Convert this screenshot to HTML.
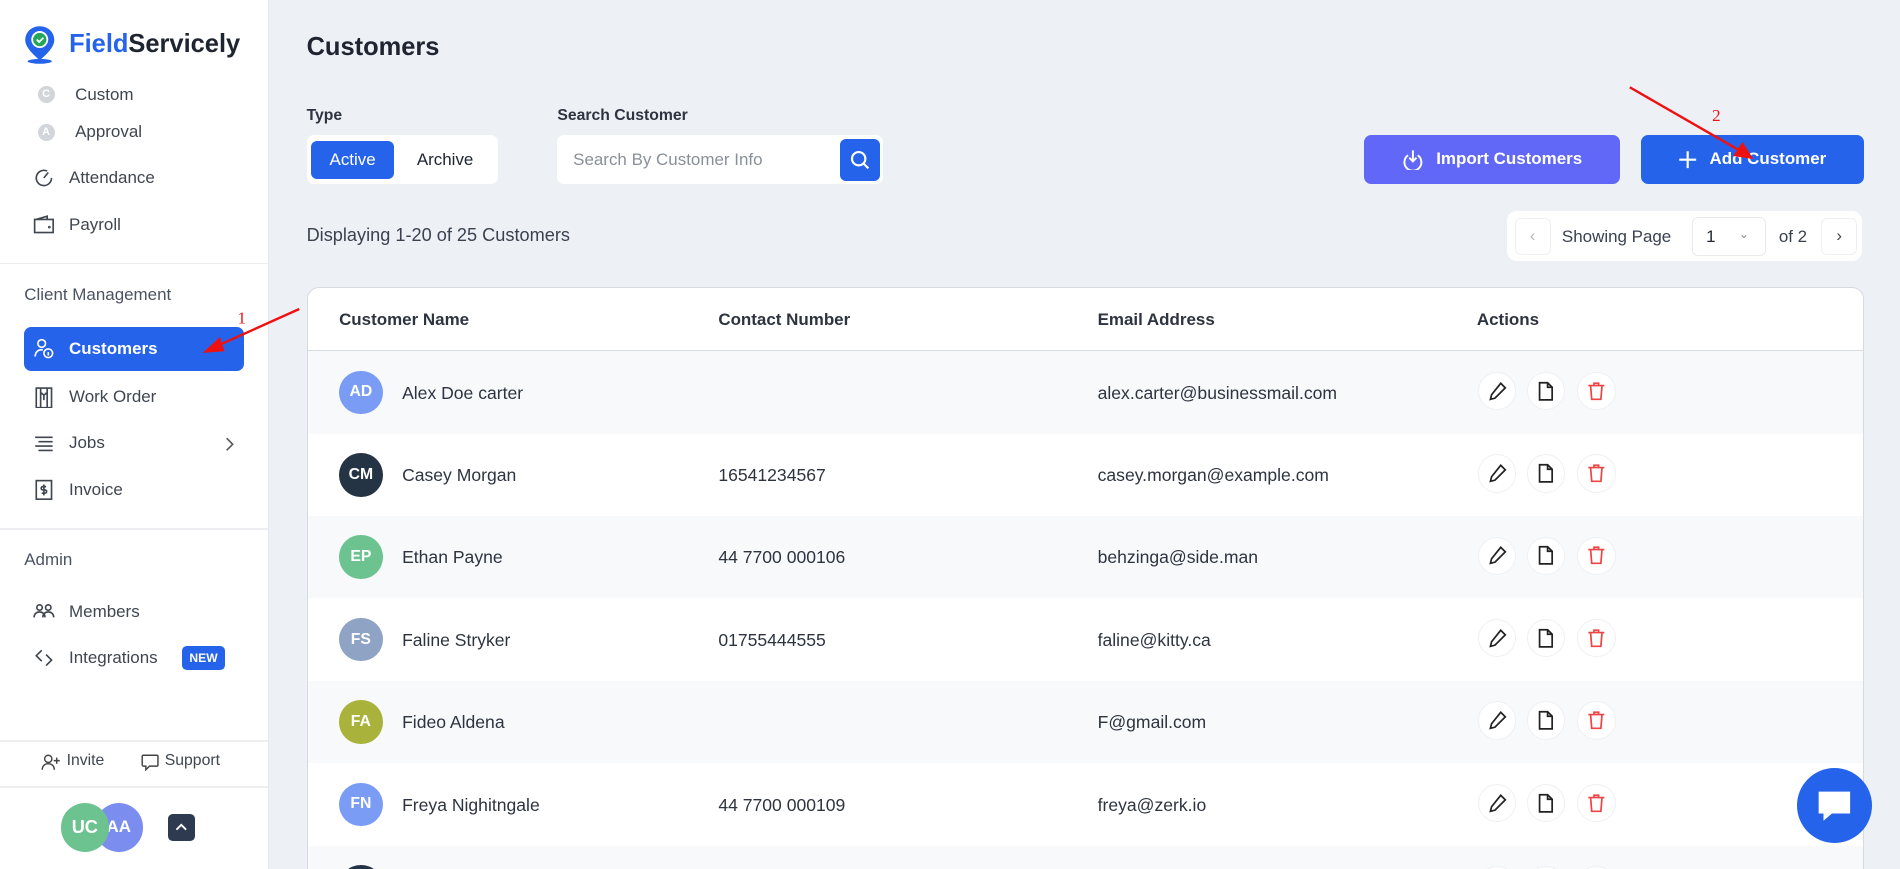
<!DOCTYPE html>
<html style="background:#edf1f6;overflow:hidden;height:717px"><head><meta charset="utf-8"><style>
html{zoom:1.21173}
body{margin:0;width:1568px;height:717px;overflow:hidden;background:#edf1f6;font-family:"Liberation Sans",sans-serif;color:#1f2937;position:relative}
.a{position:absolute}
.sb{left:0;top:0;width:221px;height:717px;background:#fff;border-right:1px solid #e5e7eb}
.ni{position:absolute;left:27px;font-size:14px;color:#3f4650;display:flex;align-items:center;gap:12px}
.ni svg{width:18px;height:18px;fill:none;stroke:#3f4650;stroke-width:1.5}
.hr{position:absolute;left:0;width:221px;height:1px;background:#eceef1}
.btn{position:absolute;border-radius:6px;color:#fff;font-size:14px;font-weight:bold;display:flex;align-items:center;justify-content:center;gap:10px}
.tbl{left:253px;top:237px;width:1284px;height:490px;background:#fff;border:1px solid #d6dbe2;border-radius:10px;overflow:hidden}
.th{position:absolute;top:18px;font-size:14px;font-weight:bold;color:#2d3440}
.row{position:absolute;left:0;width:1284px;height:68px}
.row span{position:absolute;top:26px;font-size:14.5px;color:#2d3440}
.av{position:absolute;left:26px;top:16px;width:36px;height:36px;border-radius:50%;color:#fff;font-size:13px;font-weight:bold;display:flex;align-items:center;justify-content:center}
.ac{position:absolute;top:17px;width:30px;height:30px;border-radius:50%;border:1px solid #eef0f3;background:#fff;display:flex;align-items:center;justify-content:center}
.ac svg{width:17px;height:17px;fill:none;stroke:#222;stroke-width:1.5}
</style></head><body>
<div class="a sb"></div>
<svg class="a" style="left:20px;top:21px" width="26" height="32" viewBox="0 0 26 32"><path d="M13 1C6 1 1 6 1 12.5 1 20 13 29 13 29S25 20 25 12.5C25 6 20 1 13 1Z" fill="#2563eb"/><circle cx="13" cy="12" r="7" fill="#fff"/><circle cx="13" cy="12" r="5.5" fill="#22a75a"/><path d="M10.5 12l2 2 3.5-3.5" stroke="#fff" stroke-width="1.5" fill="none"/><ellipse cx="13" cy="30" rx="10" ry="2" fill="#2563eb"/></svg>
<div class="a" style="left:57px;top:25px;font-size:21px;font-weight:bold"><span style="color:#2563eb">Field</span><span style="color:#1e2430">Servicely</span></div>
<div class="a" style="left:31px;top:71px;width:14px;height:14px;border-radius:50%;background:#d2d5da;color:#fff;font-size:9px;font-weight:bold;text-align:center;line-height:14px">C</div>
<div class="a" style="left:62px;top:70px;font-size:14px;color:#3f4650">Custom</div>
<div class="a" style="left:31px;top:102px;width:14px;height:14px;border-radius:50%;background:#d2d5da;color:#fff;font-size:9px;font-weight:bold;text-align:center;line-height:14px">A</div>
<div class="a" style="left:62px;top:101px;font-size:14px;color:#3f4650">Approval</div>
<div class="ni" style="top:138px"><svg viewBox="0 0 20 20"><path d="M17 10a7 7 0 1 1-4-6.3"/><path d="M10 10l4-5"/></svg>Attendance</div>
<div class="ni" style="top:177px"><svg viewBox="0 0 20 20"><rect x="1.5" y="5" width="17" height="12"/><path d="M3 5l10-3v3"/><circle cx="15" cy="12" r=".5"/></svg>Payroll</div>
<div class="hr" style="top:217px"></div>
<div class="a" style="left:20px;top:235px;font-size:14px;color:#4b5260">Client Management</div>
<div class="a" style="left:20px;top:270px;width:181px;height:36px;background:#2563eb;border-radius:6px"></div>
<div class="ni" style="top:279px;color:#fff;font-weight:bold"><svg viewBox="0 0 20 20" style="stroke:#fff"><circle cx="8" cy="5" r="3.5"/><path d="M2 17c0-4 3-7 7-6"/><circle cx="14" cy="14" r="4"/><path d="M14 13v3"/></svg>Customers</div>
<div class="ni" style="top:319px"><svg viewBox="0 0 20 20"><rect x="3" y="1" width="14" height="18"/><path d="M7 1v18M13 1v18M8 5a2 2 0 0 0 4 0M10 7v5"/></svg>Work Order</div>
<div class="ni" style="top:357px"><svg viewBox="0 0 20 20"><path d="M2 4h16M5 8h13M2 12h16M5 16h13"/></svg>Jobs</div>
<svg class="a" style="left:184px;top:361px" width="10" height="12" viewBox="0 0 10 12"><path d="M3 1l5 5-5 5" fill="none" stroke="#555" stroke-width="1.3"/></svg>
<div class="ni" style="top:395px"><svg viewBox="0 0 20 20"><rect x="3" y="1.5" width="14" height="17"/><path d="M10 5v10M12 7H9a1.5 1.5 0 0 0 0 3h2a1.5 1.5 0 0 1 0 3H8"/></svg>Invoice</div>
<div class="hr" style="top:436px"></div>
<div class="a" style="left:20px;top:454px;font-size:14px;color:#4b5260">Admin</div>
<div class="ni" style="top:496px"><svg viewBox="0 0 20 20"><circle cx="6" cy="6" r="2.5"/><circle cx="14" cy="6" r="2.5"/><path d="M1 15c0-3 2-5 5-5s5 2 5 5M9 15c0-3 2-5 5-5s5 2 5 5"/></svg>Members</div>
<div class="ni" style="top:534px"><svg viewBox="0 0 20 20"><path d="M8 3L3 8l5 5M12 7l5 5-5 5"/></svg>Integrations</div>
<div class="a" style="left:150px;top:533px;width:36px;height:20px;background:#2563eb;border-radius:4px;color:#fff;font-size:10px;font-weight:bold;text-align:center;line-height:20px">NEW</div>
<div class="hr" style="top:611px"></div>
<svg class="a" style="left:34px;top:622px" width="16" height="14" viewBox="0 0 16 14"><circle cx="6" cy="4" r="3" fill="none" stroke="#444" stroke-width="1.2"/><path d="M1 13c0-3 2-5 5-5s5 2 5 5M13 3v5M10.5 5.5h5" fill="none" stroke="#444" stroke-width="1.2"/></svg>
<div class="a" style="left:55px;top:621px;font-size:13px;color:#3f4650">Invite</div>
<svg class="a" style="left:116px;top:622px" width="15" height="14" viewBox="0 0 15 14"><path d="M2 1h11a1 1 0 0 1 1 1v7a1 1 0 0 1-1 1H7l-3 3v-3H2a1 1 0 0 1-1-1V2a1 1 0 0 1 1-1Z" fill="none" stroke="#444" stroke-width="1.2"/></svg>
<div class="a" style="left:136px;top:621px;font-size:13px;color:#3f4650">Support</div>
<div class="hr" style="top:649px"></div>
<div class="a" style="left:78px;top:663px;width:40px;height:40px;border-radius:50%;background:#7c8df0;color:#fff;font-size:14px;font-weight:bold;line-height:40px;text-align:center">AA</div>
<div class="a" style="left:50px;top:663px;width:40px;height:40px;border-radius:50%;background:#6cc38f;color:#fff;font-size:15px;font-weight:bold;line-height:40px;text-align:center">UC</div>
<div class="a" style="left:139px;top:672px;width:22px;height:22px;border-radius:4px;background:#2d3a4f"></div>
<svg class="a" style="left:144px;top:677px" width="12" height="12" viewBox="0 0 12 12"><path d="M2 8l4-4 4 4" fill="none" stroke="#fff" stroke-width="1.5"/></svg>

<div class="a" style="left:253px;top:27px;font-size:21px;font-weight:bold;color:#1e2430">Customers</div>
<div class="a" style="left:253px;top:88px;font-size:13px;font-weight:bold;color:#2d3440">Type</div>
<div class="a" style="left:253px;top:111px;width:158px;height:41px;background:#fff;border-radius:6px"></div>
<div class="a" style="left:257px;top:116px;width:68px;height:32px;background:#2563eb;border-radius:5px;color:#fff;font-size:14px;text-align:center;line-height:32px">Active</div>
<div class="a" style="left:344px;top:124px;font-size:14px;color:#1e2430">Archive</div>
<div class="a" style="left:460px;top:88px;font-size:13px;font-weight:bold;color:#2d3440">Search Customer</div>
<div class="a" style="left:460px;top:111px;width:269px;height:41px;background:#fff;border-radius:6px"></div>
<div class="a" style="left:473px;top:124px;font-size:14px;color:#8a9099">Search By Customer Info</div>
<div class="a" style="left:693px;top:115px;width:33px;height:34px;background:#2563eb;border-radius:5px"></div>
<svg class="a" style="left:701px;top:123px" width="18" height="18" viewBox="0 0 18 18"><circle cx="8" cy="8" r="5.5" fill="none" stroke="#fff" stroke-width="1.8"/><path d="M12 12l4 4" stroke="#fff" stroke-width="1.8"/></svg>
<div class="btn" style="left:1126px;top:111px;width:211px;height:41px;background:#6168f7"><svg width="18" height="18" viewBox="0 0 18 18" fill="none" stroke="#fff" stroke-width="1.6"><path d="M5 6a7 7 0 1 0 8 0M9 2v9M6 8l3 3 3-3"/></svg>Import Customers</div>
<div class="btn" style="left:1354px;top:111px;width:184px;height:41px;background:#2563eb"><svg width="16" height="16" viewBox="0 0 16 16"><path d="M8 1v14M1 8h14" stroke="#fff" stroke-width="1.8"/></svg>Add Customer</div>
<div class="a" style="left:253px;top:186px;font-size:15px;color:#3a4250">Displaying 1-20 of 25 Customers</div>
<div class="a" style="left:1244px;top:174px;width:293px;height:41px;background:#fff;border-radius:8px"></div>
<div class="a" style="left:1250px;top:180px;width:28px;height:29px;border:1px solid #eef0f3;border-radius:5px;color:#bbb;font-size:14px;text-align:center;line-height:28px">‹</div>
<div class="a" style="left:1289px;top:187px;font-size:14px;color:#3a4250">Showing Page</div>
<div class="a" style="left:1396px;top:179px;width:60px;height:31px;border:1px solid #e8eaee;border-radius:5px"></div>
<div class="a" style="left:1408px;top:187px;font-size:14px;color:#1e2430">1</div>
<div class="a" style="left:1435px;top:187px;font-size:10px;color:#888">⌄</div>
<div class="a" style="left:1468px;top:187px;font-size:14px;color:#3a4250">of 2</div>
<div class="a" style="left:1503px;top:180px;width:28px;height:29px;border:1px solid #eef0f3;border-radius:5px;color:#444;font-size:14px;text-align:center;line-height:28px">›</div>

<div class="a tbl">
<div class="th" style="left:26px">Customer Name</div><div class="th" style="left:339px">Contact Number</div><div class="th" style="left:652px">Email Address</div><div class="th" style="left:965px">Actions</div>
<div class="a" style="left:0;top:51px;width:1284px;height:1px;background:#d6dbe2"></div>
<div id="rows"></div>
</div>
<script>
var d=[["AD","#7b9cf5","Alex Doe carter","","alex.carter@businessmail.com"],["CM","#253445","Casey Morgan","16541234567","casey.morgan@example.com"],["EP","#6cc38f","Ethan Payne","44 7700 000106","behzinga@side.man"],["FS","#8fa3c4","Faline Stryker","01755444555","faline@kitty.ca"],["FA","#a9b23a","Fideo Aldena","","F@gmail.com"],["FN","#7b9cf5","Freya Nighitngale","44 7700 000109","freya@zerk.io"],["","#253445","","",""]];
var h="";d.forEach(function(r,i){h+='<div class="row" style="top:'+(52+i*68)+'px;background:'+(i%2?'#fff':'#f7f9fb')+'"><div class="av" style="background:'+r[1]+'">'+r[0]+'</div><span style="left:78px">'+r[2]+'</span><span style="left:339px">'+r[3]+'</span><span style="left:652px">'+r[4]+'</span>'+
'<div class="ac" style="left:966px"><svg viewBox="0 0 18 18"><path d="M12 2l4 4-9 9-4 1 1-4z"/></svg></div><div class="ac" style="left:1006px"><svg viewBox="0 0 18 18"><path d="M4 1.5h7l4 4v11H4z M11 1.5v4h4"/></svg></div><div class="ac" style="left:1048px"><svg viewBox="0 0 18 18" style="stroke:#ef4444"><path d="M2 4h14M7 4V2h4v2M4 4l1 12h8l1-12"/></svg></div></div>'});
document.getElementById("rows").innerHTML=h;
</script>
<div class="a" style="left:1483px;top:634px;width:62px;height:62px;border-radius:50%;background:#2563eb"></div>
<svg class="a" style="left:1498px;top:650px" width="32" height="30" viewBox="0 0 32 30"><path d="M3 3h26v18H14l-7 6v-6H3z" fill="#fff"/></svg>
<svg class="a" style="left:0;top:0" width="1568" height="717"><g stroke="#e11" stroke-width="2" fill="#e11"><line x1="247" y1="255" x2="178" y2="286"/><polygon points="170,290 181,280 184,289"/><line x1="1345" y1="72" x2="1437" y2="125"/><polygon points="1445,130 1432,128 1438,119"/></g><text x="196" y="267" fill="#e11" font-size="14" font-family="Liberation Serif">1</text><text x="1413" y="100" fill="#e11" font-size="14" font-family="Liberation Serif">2</text></svg>
</body></html>
